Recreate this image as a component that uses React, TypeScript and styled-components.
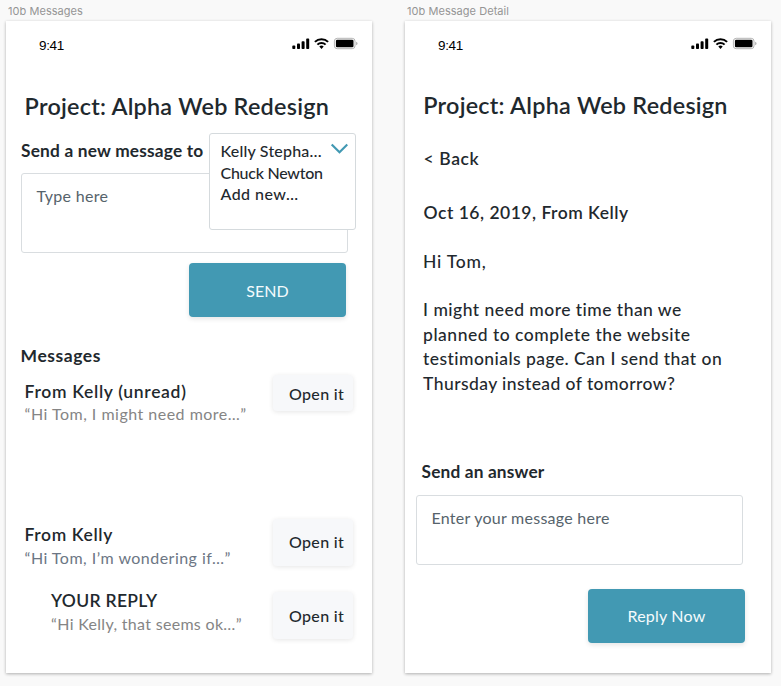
import React from 'react';
import styled, { createGlobalStyle } from 'styled-components';

const ink = '#1f292e';
const teal = '#4299b3';

const GlobalStyle = createGlobalStyle`
  * { box-sizing: border-box; }
  body { margin: 0; background: #f9f9f9; font-family: Lato, "Open Sans", sans-serif; color: ${ink}; }
  button { border: 0; padding: 0; font-family: inherit; }
`;

const Canvas = styled.main`
  display: flex;
  gap: 33px;
  height: 686px;
  padding: 4px 0 0 5.6px;
  overflow: hidden;
`;

const Artboard = styled.section`
  flex: none;
  width: 366px;
`;

const ArtboardName = styled.div`
  height: 17px;
  padding-left: 2.4px;
  font: 400 11px/15px Inter, sans-serif;
  letter-spacing: 0.05px;
  color: #959595;
  white-space: nowrap;
`;

const Screen = styled.div`
  height: 652px;
  background: #fff;
  box-shadow: 0 1px 3px rgba(0, 0, 0, 0.3);
`;

const StatusBar = styled.header`
  display: flex;
  align-items: center;
  justify-content: space-between;
  height: 45px;
  padding: 0 14px 0 33.4px;
`;

const Time = styled.span`
  font: 400 13.5px/16px "Liberation Sans", sans-serif;
  letter-spacing: -0.35px;
  color: #000;
  padding-top: 4px;
`;

const Line = styled.div<{ $size?: number; $weight?: number; $ls?: number; $top?: number; $left?: number; $lh?: number; $color?: string }>`
  font-size: ${p => p.$size ?? 17}px;
  font-weight: ${p => p.$weight ?? 500};
  line-height: ${p => p.$lh ?? 20}px;
  letter-spacing: ${p => p.$ls ?? 0}px;
  margin-top: ${p => p.$top ?? 0}px;
  margin-left: ${p => p.$left ?? 0}px;
  color: ${p => p.$color ?? ink};
  white-space: nowrap;
`;

const Title = styled.h1<{ $top: number; $left: number }>`
  margin: ${p => p.$top}px 0 0 ${p => p.$left}px;
  font-size: 23.4px;
  font-weight: 600;
  line-height: 28px;
  letter-spacing: 0.24px;
  white-space: nowrap;
`;

const ComposeRow = styled.div`
  position: relative;
  margin: 21px 0 0 15.4px;
`;

const Recipients = styled.div`
  position: absolute;
  left: 188px;
  top: -8px;
  z-index: 1;
  display: flex;
  justify-content: space-between;
  width: 147px;
  height: 97px;
  padding: 6px 7px 0 10.5px;
  background: #fff;
  border: 1px solid #d5dadd;
  border-radius: 3px;
`;

const Option = styled.div<{ $ls: number }>`
  width: 104px;
  font-size: 16px;
  font-weight: 500;
  line-height: 21.5px;
  letter-spacing: ${p => p.$ls}px;
  white-space: nowrap;
`;

const Chevron = styled.svg`
  flex: none;
  margin: 0 0 0 -3px;
`;

const Field = styled.div<{ $height: number; $top: number; $left: number; $pad: number }>`
  width: 327px;
  height: ${p => p.$height}px;
  margin: ${p => p.$top}px 0 0 ${p => p.$left}px;
  padding: ${p => p.$pad}px 0 0 14.5px;
  border: 1px solid #d9dde0;
  border-radius: 3px;
`;

const PrimaryButton = styled.button<{ $top: number; $left: number; $ls: number; $pad?: number }>`
  display: flex;
  align-items: center;
  justify-content: center;
  width: 157px;
  height: 54px;
  margin: ${p => p.$top}px 0 0 ${p => p.$left}px;
  padding-top: ${p => p.$pad ?? 0}px;
  border-radius: 4px;
  background: ${teal};
  color: #f4fbfd;
  font-size: 16px;
  letter-spacing: ${p => p.$ls}px;
  box-shadow: 0 2px 5px rgba(0, 0, 0, 0.1);
`;

const MessageRow = styled.article<{ $height: number; $indent?: number }>`
  display: flex;
  justify-content: space-between;
  height: ${p => p.$height}px;
  padding: 0 18.6px 0 ${p => p.$indent ?? 19}px;
`;

const OpenButton = styled.button<{ $height: number; $top: number; $pad: number }>`
  display: flex;
  align-items: flex-start;
  width: 80px;
  height: ${p => p.$height}px;
  margin-top: ${p => p.$top}px;
  padding: ${p => p.$pad}px 0 0 16px;
  border-radius: 4px;
  background: #f7f8fa;
  color: ${ink};
  font-size: 16px;
  font-weight: 500;
  line-height: 20px;
  letter-spacing: 0.34px;
  box-shadow: 0 1px 5px rgba(0, 0, 0, 0.1);
`;

const StatusIcons = () => (
  <svg width="66" height="14" viewBox="0 0 66 14">
    <rect x="0.3" y="8.6" width="3" height="3.4" rx="0.8" />
    <rect x="5" y="6.6" width="3" height="5.4" rx="0.8" />
    <rect x="9.6" y="4.2" width="3" height="7.8" rx="0.8" />
    <rect x="14.2" y="1.6" width="3" height="10.4" rx="0.8" />
    <g fill="none" stroke="#000" strokeWidth="2">
      <path d="M22.9 4.9a9.4 9.4 0 0 1 13.2 0" />
      <path d="M25.4 7.6a5.8 5.8 0 0 1 8.2 0" />
    </g>
    <path d="M29.5 11.9l-2.2-2.3a3.2 3.2 0 0 1 4.4 0z" />
    <rect x="42.4" y="1.3" width="20.6" height="10.4" rx="2.8" fill="none" stroke="#b4b4b4" />
    <rect x="43.9" y="2.8" width="17.6" height="7.4" rx="1.3" />
    <path d="M64.2 4.8c1.8.5 1.8 2.9 0 3.4z" fill="#aaa" />
  </svg>
);

const Status = () => (
  <StatusBar>
    <Time>9:41</Time>
    <StatusIcons />
  </StatusBar>
);

export default function App() {
  return (
    <>
      <GlobalStyle />
      <Canvas>
        <Artboard>
          <ArtboardName>10b Messages</ArtboardName>
          <Screen>
            <Status />
            <Title $top={26} $left={19}>Project: Alpha Web Redesign</Title>
            <ComposeRow>
              <Line $weight={700} $size={17.3} $ls={0.2}>Send a new message to</Line>
              <Recipients>
                <div>
                  <Option $ls={0.2}>Kelly Stepha…</Option>
                  <Option $ls={-0.25}>Chuck Newton</Option>
                  <Option $ls={0.45}>Add new…</Option>
                </div>
                <Chevron width="18" height="18" viewBox="0 0 18 18" fill="none" stroke={teal} strokeWidth="2.2">
                  <path d="M1.7 4.5L9.5 12.2L17.3 4.5" />
                </Chevron>
              </Recipients>
              <Field $height={80} $top={12} $left={0} $pad={12}>
                <Line $size={16} $weight={400} $ls={0.28} $color="#56636b">Type here</Line>
              </Field>
            </ComposeRow>
            <PrimaryButton $top={10} $left={183.4} $ls={0.05}>SEND</PrimaryButton>
            <Line $weight={700} $size={17.5} $ls={0.55} $top={29} $left={15}>Messages</Line>
            <MessageRow $height={144}>
              <div>
                <Line $size={17.5} $weight={600} $ls={0.68} $top={16}>From Kelly (unread)</Line>
                <Line $size={16} $weight={400} $ls={0.49} $top={2} $color="#858585">“Hi Tom, I might need more…”</Line>
              </div>
              <OpenButton $height={36} $top={9} $pad={9}>Open it</OpenButton>
            </MessageRow>
            <MessageRow $height={72}>
              <div>
                <Line $size={17.5} $weight={600} $ls={0.6} $top={15}>From Kelly</Line>
                <Line $size={16} $weight={400} $ls={0.47} $top={3} $color="#6c7684">“Hi Tom, I’m wondering if…”</Line>
              </div>
              <OpenButton $height={47} $top={9} $pad={13}>Open it</OpenButton>
            </MessageRow>
            <MessageRow $height={60} $indent={45.5}>
              <div>
                <Line $size={17.5} $weight={600} $ls={0.3} $top={9}>YOUR REPLY</Line>
                <Line $size={16} $weight={400} $ls={0.31} $top={3} $color="#858585">“Hi Kelly, that seems ok…”</Line>
              </div>
              <OpenButton $height={47} $top={10} $pad={14}>Open it</OpenButton>
            </MessageRow>
          </Screen>
        </Artboard>

        <Artboard>
          <ArtboardName>10b Message Detail</ArtboardName>
          <Screen>
            <Status />
            <Title $top={25} $left={18.7}>Project: Alpha Web Redesign</Title>
            <Line $weight={600} $size={17.5} $ls={0.6} $top={30} $left={19}>&lt; Back</Line>
            <Line $weight={600} $size={17.5} $ls={0.5} $top={34} $left={19}>Oct 16, 2019, From Kelly</Line>
            <Line $size={17.5} $lh={24.4} $ls={0.75} $top={26.5} $left={18.5}>Hi Tom,</Line>
            <Line $size={17.5} $lh={24.4} $ls={0.46} $top={24.4} $left={18.5}>I might need more time than we</Line>
            <Line $size={17.5} $lh={24.4} $ls={0.5} $left={18.5}>planned to complete the website</Line>
            <Line $size={17.5} $lh={24.4} $ls={0.44} $left={18.5}>testimonials page. Can I send that on</Line>
            <Line $size={17.5} $lh={24.4} $ls={0.42} $left={18.5}>Thursday instead of tomorrow?</Line>
            <Line $weight={700} $size={17.3} $ls={0.15} $top={66} $left={17}>Send an answer</Line>
            <Field $height={70} $top={13} $left={11.4} $pad={12}>
              <Line $size={16} $weight={400} $ls={0.26} $color="#56636b">Enter your message here</Line>
            </Field>
            <PrimaryButton $top={24} $left={183.4} $ls={0.2}>Reply Now</PrimaryButton>
          </Screen>
        </Artboard>
      </Canvas>
    </>
  );
}
